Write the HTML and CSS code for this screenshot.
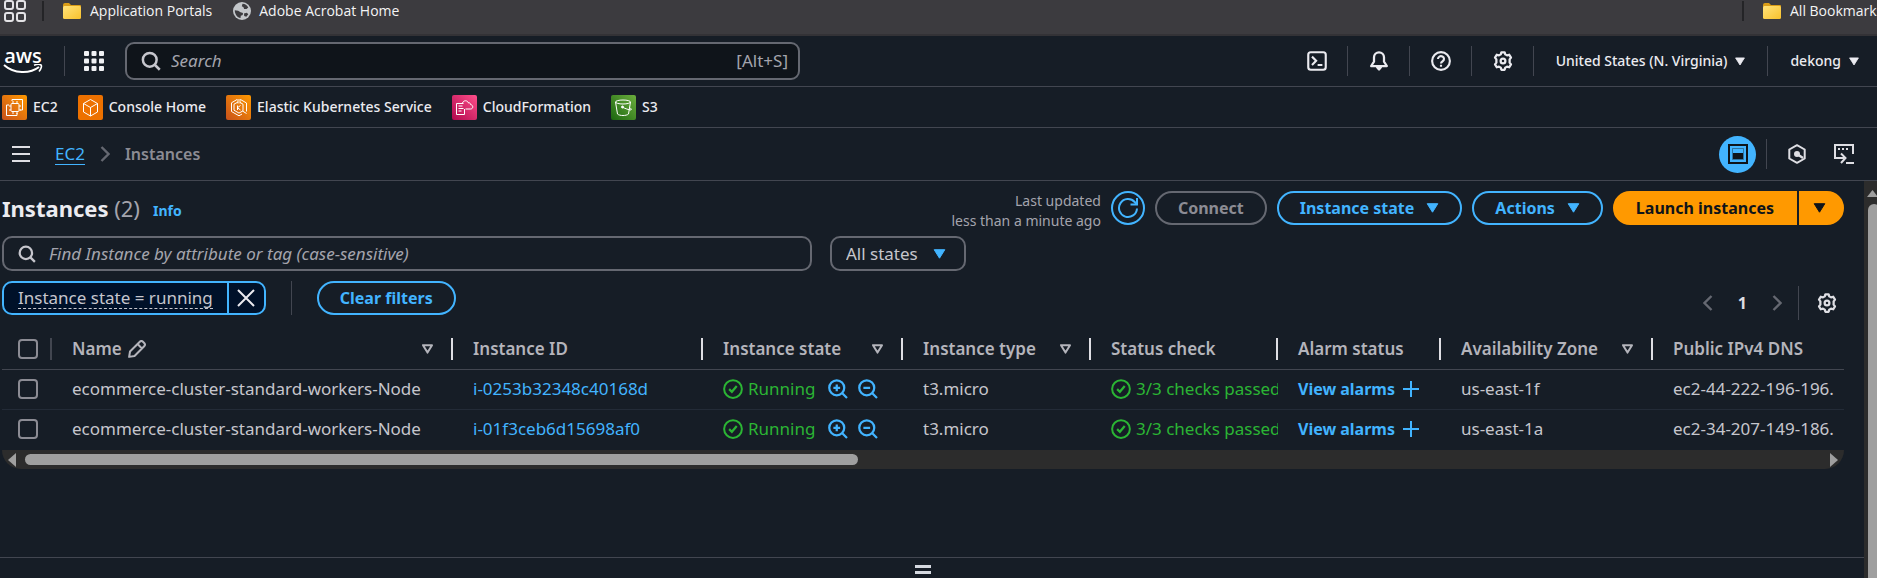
FILE: index.html
```html
<!DOCTYPE html>
<html lang="en">
<head>
<meta charset="utf-8">
<title>Instances | EC2</title>
<link rel="stylesheet" href="styles.css">
</head>
<body>
<svg class="defs" aria-hidden="true">
  <defs>
    <linearGradient id="g-orange" x1="0" y1="1" x2="1" y2="0"><stop offset="0" stop-color="#c8511b"/><stop offset="1" stop-color="#ff9900"/></linearGradient>
    <linearGradient id="g-pink" x1="0" y1="1" x2="1" y2="0"><stop offset="0" stop-color="#b0084d"/><stop offset="1" stop-color="#ff4f8b"/></linearGradient>
    <linearGradient id="g-green" x1="0" y1="1" x2="1" y2="0"><stop offset="0" stop-color="#1b660f"/><stop offset="1" stop-color="#6cae3e"/></linearGradient>
    <linearGradient id="g-folder" x1="0" y1="0" x2="1" y2="1"><stop offset="0" stop-color="#ffe27a"/><stop offset="1" stop-color="#f8c12c"/></linearGradient>
    <symbol id="i-folder" viewBox="0 0 20 18"><path fill="#d99c17" d="M1 3a2 2 0 0 1 2-2h4l2 2h9a1 1 0 0 1 1 1v12H1z"/><rect x="1" y="4" width="18" height="13" rx="1.500" fill="url(#g-folder)"/></symbol>
    <symbol id="i-search" viewBox="0 0 16 16"><g fill="none" stroke="currentColor" stroke-width="2"><circle cx="7" cy="7" r="5.500"/><path d="m11 11 4 4"/></g></symbol>
    <symbol id="i-caret" viewBox="0 0 12 10"><path fill="currentColor" stroke="currentColor" stroke-linejoin="round" d="M.7.700h10.600L6 9.200z"/></symbol>
    <symbol id="i-sort" viewBox="0 0 12 10"><path fill="none" stroke="currentColor" stroke-width="2" stroke-linejoin="round" d="M1.500 1.200h9L6 8.600z"/></symbol>
    <symbol id="i-gear" viewBox="0 0 16 16"><g fill="none" stroke="currentColor" stroke-width="1.800" stroke-linejoin="round"><path d="M6.700 1h2.600l.5 1.700 1.400.8 1.800-.5 1.400 2.300-1.100 1.400v2.600l1.100 1.400-1.400 2.300-1.800-.5-1.400.8-.5 1.700H6.700l-.5-1.700-1.400-.8-1.800.5-1.400-2.300 1.100-1.400V6.700L1.600 5.300 3 3l1.800.5 1.400-.8z"/><circle cx="8" cy="8" r="1.900"/></g></symbol>
    <symbol id="i-check" viewBox="0 0 16 16"><g fill="none" stroke="currentColor" stroke-width="1.600"><circle cx="8" cy="8" r="7.100"/><path stroke-width="1.800" d="m4.900 8.100 2.200 2.100 3.900-4.600"/></g></symbol>
    <symbol id="i-zoomin" viewBox="0 0 16 16"><g fill="none" stroke="currentColor" stroke-width="1.800"><circle cx="7" cy="7" r="6"/><path d="m11.200 11.200 4 4M7 4.300v5.400M4.300 7h5.400"/></g></symbol>
    <symbol id="i-zoomout" viewBox="0 0 16 16"><g fill="none" stroke="currentColor" stroke-width="1.800"><circle cx="7" cy="7" r="6"/><path d="m11.200 11.200 4 4M4.300 7h5.400"/></g></symbol>
    <symbol id="i-plus" viewBox="0 0 16 16"><path stroke="currentColor" stroke-width="2" d="M8 0v16M0 8h16"/></symbol>
    <symbol id="i-right" viewBox="0 0 10 16"><path fill="none" stroke="currentColor" stroke-width="2.400" d="m1.500 1 7 7-7 7"/></symbol>
    <symbol id="i-left" viewBox="0 0 10 16"><path fill="none" stroke="currentColor" stroke-width="2.400" d="m8.500 1-7 7 7 7"/></symbol>
  </defs>
</svg>

<div class="bookmarks">
  <button class="plain" aria-label="Tab groups"><svg width="24" height="24" viewBox="0 0 24 24" fill="none" stroke="#e4e3e6" stroke-width="2"><rect x="2" y="2" width="8" height="8" rx="2"/><rect x="14" y="2" width="8" height="8" rx="2"/><rect x="2" y="14" width="8" height="8" rx="2"/><rect x="14" y="14" width="8" height="8" rx="2"/></svg></button>
  <span class="bm-rule"></span>
  <a class="bm" href="#"><svg width="20" height="18"><use href="#i-folder"/></svg>Application Portals</a>
  <a class="bm" href="#"><svg width="18" height="18" viewBox="0 0 18 18"><circle cx="9" cy="9" r="9" fill="#c3c6ca"/><path fill="#3c3b3f" d="M9.500 1.800c2.600.2 4.600 1.500 5.800 3.700l-1.800 1.600-2.400-.2-.6-1.700-1.700-1zM1.800 8.200l3.400.6 2.300 1.500 2.500.6-.3 2-1.900.9-.3 2.300C4.300 15.300 1.700 12.300 1.800 8.200zM11 11.600l2.800-.9 1.500 1.500-2 2.500-2.100-.8z"/></svg>Adobe Acrobat Home</a>
  <span class="bm-rule bm-end"></span>
  <a class="bm bm-all" href="#"><svg width="20" height="18"><use href="#i-folder"/></svg>All Bookmarks</a>
</div>

<header class="top">
  <a class="logo" href="#" aria-label="AWS home"><span class="logo-word">aws</span><svg width="40" height="10" viewBox="0 0 40 10" fill="none" stroke="#fff"><path stroke-width="2" d="M1 1c10 9 26 9 35 2"/><path stroke-width="1.600" d="M31 1.300c3-1.200 6-1 7-.3s.3 4-2 6.500"/></svg></a>
  <span class="rule"></span>
  <button class="plain services" aria-label="Services"><svg width="20" height="20" viewBox="0 0 20 20" fill="#f0f1f4"><g id="dots"><rect width="5" height="5" rx="1"/><rect x="7.500" width="5" height="5" rx="1"/><rect x="15" width="5" height="5" rx="1"/></g><use href="#dots" y="7.500"/><use href="#dots" y="15"/></svg></button>
  <label class="search"><svg width="20" height="20"><use href="#i-search"/></svg><input type="text" placeholder="Search" aria-label="Search"><span>[Alt+S]</span></label>
  <nav class="tools">
    <button class="plain tool" aria-label="CloudShell"><svg width="20" height="20" viewBox="0 0 16 16" fill="none" stroke="currentColor" stroke-width="1.700"><rect x="1" y="1" width="14" height="14" rx="2"/><path d="m4 4.500 3.300 3.300L4 11.200M8.500 11.200h3.800"/></svg></button>
    <button class="plain tool" aria-label="Notifications"><svg width="20" height="20" viewBox="0 0 16 16" fill="none" stroke="currentColor" stroke-width="1.800" stroke-linejoin="round"><path d="M8 1a4 4 0 0 0-4 4v3.500L1.700 12h12.600L12 8.500V5a4 4 0 0 0-4-4z"/><path fill="currentColor" d="M6.500 13h3L8 14.800z"/></svg></button>
    <button class="plain tool" aria-label="Help"><svg width="20" height="20" viewBox="0 0 16 16" fill="none" stroke="currentColor" stroke-width="1.700"><circle cx="8" cy="8" r="7.100"/><path d="M5.600 6.400a2.400 2.200 0 1 1 3.700 1.800C8.300 8.800 8 9 8 10"/><path d="M8 11v1.600"/></svg></button>
    <button class="plain tool" aria-label="Settings"><svg width="20" height="20"><use href="#i-gear"/></svg></button>
    <button class="plain menu">United States (N. Virginia)<svg width="10" height="9"><use href="#i-caret"/></svg></button>
    <button class="plain menu">dekong<svg width="10" height="9"><use href="#i-caret"/></svg></button>
  </nav>
</header>

<nav class="favorites">
  <a href="#"><svg width="25" height="25" viewBox="0 0 25 25" fill="none" stroke="#fff"><rect width="25" height="25" rx="2" fill="url(#g-orange)" stroke="none"/><path d="M10 6V4.500h10.500V15H18M7 10H4.500v10.500H15V18"/><rect x="9" y="8.500" width="8" height="8" rx="1"/><path d="M11 6v2M15 6v2M11 17v2M15 17v2M7 11h2M7 15h2M17 11h2M17 15h2"/></svg>EC2</a>
  <a href="#"><svg width="25" height="25" viewBox="0 0 25 25" fill="none" stroke="#fff"><rect width="25" height="25" rx="2" fill="#ed7100" stroke="none"/><path stroke-linejoin="round" d="m12.500 4.500 7 4v8.500l-7 4-7-4V8.500zM5.500 8.500l7 4 7-4M12.500 12.500V21"/></svg>Console Home</a>
  <a href="#"><svg width="25" height="25" viewBox="0 0 25 25" fill="none" stroke="#fff"><rect width="25" height="25" rx="2" fill="url(#g-orange)" stroke="none"/><path d="M11 4.500 5.500 7.800v8.700l7.500 4.300 3-1.800M14.500 4.500l6 3.500v8.500M12 7 8 9.200v6l5 2.900 4-2.300V9.200L14 7.400M12 4v4.500M14 4v4.500M16.500 16l4 2.500M11.500 10.500v4.500M14.500 10.500l-3 2.200 3 2.300"/></svg>Elastic Kubernetes Service</a>
  <a href="#"><svg width="25" height="25" viewBox="0 0 25 25" fill="none" stroke="#fff"><rect width="25" height="25" rx="2" fill="url(#g-pink)" stroke="none"/><path d="M12.500 14v5.500h-8V8.500h7M6.500 11h4M6.500 13.500h5M6.500 16h3M10.500 8c1-3 5-3 6 0 1.500-.5 2 .5 2 1.500 3 .5 3 4.500 0 4.500h-5"/></svg>CloudFormation</a>
  <a href="#"><svg width="25" height="25" viewBox="0 0 25 25" fill="none" stroke="#fff"><rect width="25" height="25" rx="2" fill="url(#g-green)" stroke="none"/><ellipse cx="12" cy="7" rx="7.500" ry="2"/><path d="m4.500 7 2 12c2 2 9 2 11 0l2-12M11 12c3 1.500 7 3 9 3 1-.5-.5-2-2-3"/><circle cx="11.500" cy="12" r="1" fill="#fff"/></svg>S3</a>
</nav>

<div class="crumbs">
  <button class="plain" aria-label="Open navigation"><svg width="18" height="16" viewBox="0 0 18 16" fill="#dedee3"><path d="M0 0h18v2H0zM0 7h18v2H0zM0 14h18v2H0z"/></svg></button>
  <a class="crumb-link" href="#">EC2</a>
  <svg class="crumb-sep" width="10" height="16"><use href="#i-right"/></svg>
  <span class="crumb-here">Instances</span>
  <div class="crumb-tools">
    <button class="plain split" aria-label="Split panel"><svg width="20" height="20" viewBox="0 0 20 20"><rect x="1" y="1" width="18" height="18" fill="none" stroke="#0f141a" stroke-width="2"/><path fill="none" stroke="#0f141a" stroke-opacity=".4" d="M4.500 4.500h11v11h-11z"/><path fill="#0f141a" d="M5 9h10v6H5z"/></svg></button>
    <span class="rule"></span>
    <button class="plain" aria-label="Amazon Q"><svg width="20" height="20" viewBox="0 0 20 20" fill="none" stroke="#dedee3" stroke-width="2"><path stroke-linejoin="round" d="m10 1.200 7.700 4.300v9L10 18.800l-7.700-4.300v-9z"/><path stroke-width="2.500" d="m10 10 6 4"/><circle cx="10" cy="10" r="2" fill="#dedee3"/></svg></button>
    <button class="plain" aria-label="Console to code"><svg width="20" height="20" viewBox="0 0 20 20" fill="none" stroke="#dedee3" stroke-width="2"><path d="M19 10V1H1v13h9M7 9.500l4.500 4.500L7 19M12 19h8"/><path d="M4 5h2M8 5h2M12 5h2"/></svg></button>
  </div>
</div>

<div class="body">
  <main class="page">
    <section class="instances">
      <div class="heading">
        <h1>Instances <span>(2)</span></h1>
        <a class="info" href="#">Info</a>
        <div class="actions">
          <p class="updated">Last updated<br>less than a minute ago</p>
          <button class="btn refresh" aria-label="Refresh"><svg width="22" height="22" viewBox="0 0 22 22" fill="none" stroke="currentColor" stroke-width="2"><path d="M20 11.500A9 9 0 1 1 17.700 5L20 7.500"/><path d="M20 1v6.500h-6.500"/></svg></button>
          <button class="btn" disabled>Connect</button>
          <button class="btn">Instance state<svg width="13" height="10"><use href="#i-caret"/></svg></button>
          <button class="btn">Actions<svg width="13" height="10"><use href="#i-caret"/></svg></button>
          <div class="launch"><button class="btn">Launch instances</button><button class="btn" aria-label="More launch options"><svg width="13" height="10"><use href="#i-caret"/></svg></button></div>
        </div>
      </div>
      <div class="filters">
        <label class="find"><svg width="18" height="18"><use href="#i-search"/></svg><input type="text" placeholder="Find Instance by attribute or tag (case-sensitive)" aria-label="Find Instance"></label>
        <div class="states"><select aria-label="States"><option>All states</option></select><svg width="13" height="10"><use href="#i-caret"/></svg></div>
      </div>
      <div class="tokens">
        <div class="token"><button class="plain token-text"><span>Instance state = running</span></button><button class="plain token-x" aria-label="Remove filter"><svg width="18" height="18" viewBox="0 0 18 18" stroke="#ebebf0" stroke-width="2"><path d="m1 1 16 16M17 1 1 17"/></svg></button></div>
        <span class="rule"></span>
        <button class="btn">Clear filters</button>
        <div class="pager">
          <button class="plain dim" aria-label="Previous page"><svg width="10" height="16"><use href="#i-left"/></svg></button>
          <button class="plain page-no">1</button>
          <button class="plain dim" aria-label="Next page"><svg width="10" height="16"><use href="#i-right"/></svg></button>
          <span class="rule"></span>
          <button class="plain" aria-label="Preferences"><svg width="20" height="20"><use href="#i-gear"/></svg></button>
        </div>
      </div>
      <table class="grid">
        <colgroup><col class="c-pick"><col class="c-name"><col class="c-id"><col class="c-state"><col class="c-type"><col class="c-check"><col class="c-alarm"><col class="c-zone"><col></colgroup>
        <thead>
          <tr>
            <th class="pick"><div><input type="checkbox" aria-label="Select all"></div></th>
            <th><div>Name<svg class="pencil" width="18" height="18" viewBox="0 0 16 16" fill="none" stroke="currentColor" stroke-width="1.800" stroke-linejoin="round"><path d="M1 15l.8-4.800L10.500 1.600a2 2 0 0 1 2.800 0l1.100 1.100a2 2 0 0 1 0 2.800L5.800 14.200zM8.500 3.600l3.900 3.900"/></svg><svg class="sort" width="13" height="10"><use href="#i-sort"/></svg></div></th>
            <th><div>Instance ID</div></th>
            <th><div>Instance state<svg class="sort" width="13" height="10"><use href="#i-sort"/></svg></div></th>
            <th><div>Instance type<svg class="sort" width="13" height="10"><use href="#i-sort"/></svg></div></th>
            <th><div>Status check</div></th>
            <th><div>Alarm status</div></th>
            <th><div>Availability Zone<svg class="sort" width="13" height="10"><use href="#i-sort"/></svg></div></th>
            <th class="last"><div>Public IPv4 DNS</div></th>
          </tr>
        </thead>
        <tbody>
          <tr>
            <td class="pick"><div><input type="checkbox" aria-label="Select i-0253b32348c40168d"></div></td>
            <td>ecommerce-cluster-standard-workers-Node</td>
            <td><a href="#">i-0253b32348c40168d</a></td>
            <td><div class="cell"><span class="ok"><svg width="20" height="20"><use href="#i-check"/></svg>Running</span><button class="plain zoom" aria-label="Filter in"><svg width="20" height="20"><use href="#i-zoomin"/></svg></button><button class="plain zoom" aria-label="Filter out"><svg width="20" height="20"><use href="#i-zoomout"/></svg></button></div></td>
            <td>t3.micro</td>
            <td><div class="cell"><span class="ok"><svg width="20" height="20"><use href="#i-check"/></svg>3/3 checks passed</span></div></td>
            <td><div class="cell"><a class="alarm" href="#">View alarms<svg width="16" height="16"><use href="#i-plus"/></svg></a></div></td>
            <td>us-east-1f</td>
            <td>ec2-44-222-196-196.</td>
          </tr>
          <tr>
            <td class="pick"><div><input type="checkbox" aria-label="Select i-01f3ceb6d15698af0"></div></td>
            <td>ecommerce-cluster-standard-workers-Node</td>
            <td><a href="#">i-01f3ceb6d15698af0</a></td>
            <td><div class="cell"><span class="ok"><svg width="20" height="20"><use href="#i-check"/></svg>Running</span><button class="plain zoom" aria-label="Filter in"><svg width="20" height="20"><use href="#i-zoomin"/></svg></button><button class="plain zoom" aria-label="Filter out"><svg width="20" height="20"><use href="#i-zoomout"/></svg></button></div></td>
            <td>t3.micro</td>
            <td><div class="cell"><span class="ok"><svg width="20" height="20"><use href="#i-check"/></svg>3/3 checks passed</span></div></td>
            <td><div class="cell"><a class="alarm" href="#">View alarms<svg width="16" height="16"><use href="#i-plus"/></svg></a></div></td>
            <td>us-east-1a</td>
            <td>ec2-34-207-149-186.</td>
          </tr>
        </tbody>
      </table>
      <div class="hbar" aria-hidden="true"><svg width="8" height="14" viewBox="0 0 8 14"><path fill="#9f9f9f" d="M8 0v14L0 7z"/></svg><div class="htrack"><div class="hthumb"></div></div><svg width="8" height="14" viewBox="0 0 8 14"><path fill="#9f9f9f" d="M0 0v14l8-7z"/></svg></div>
    </section>
    <div class="panel"><button class="plain" aria-label="Resize panel"><svg width="16" height="10" viewBox="0 0 16 10" fill="#d5d9e0"><path d="M0 0h16v3H0zM0 6h16v3H0z"/></svg></button></div>
  </main>
  <div class="vbar" aria-hidden="true"><svg width="11" height="7" viewBox="0 0 11 7"><path fill="#9f9f9f" d="M0 7 5.500 0 11 7z"/></svg><div class="vthumb"></div></div>
</div>
</body>
</html>
```
FILE: styles.css
```css
* { box-sizing: border-box; }
body {
  margin: 0;
  height: 100vh;
  display: flex;
  flex-direction: column;
  overflow: hidden;
  background: #161d26;
  color: #c6c6cd;
  font: 17px/20px "Noto Sans", "Open Sans", sans-serif;
}
svg { flex: none; display: block; }
.defs { width: 0; height: 0; position: absolute; }
a { color: #42b4ff; text-decoration: none; }
input, select, button { font: inherit; color: inherit; }
.plain { background: none; border: 0; padding: 0; display: flex; align-items: center; cursor: pointer; }
.rule { width: 1px; height: 30px; background: #424650; flex: none; }

/* Browser bookmarks */
.bookmarks {
  flex: none; height: 36px; padding: 0 0 12px 3px;
  display: flex; align-items: center;
  background: #3c3b3f; border-bottom: 2px solid #333236;
  font: 14px/20px "Open Sans", "Noto Sans", sans-serif; color: #f4f4f5;
  white-space: nowrap; overflow: hidden;
}
.bm-rule { width: 2px; height: 20px; margin: 0 18px 0 15px; background: #242427; flex: none; }
.bm { display: flex; align-items: center; gap: 8px; color: inherit; margin-right: 21px; }
.bm-end { margin-left: auto; }
.bm-all { width: 115px; margin-right: 0; }

/* Console header */
.top { flex: none; height: 51px; display: flex; align-items: center; border-bottom: 1px solid #424650; padding: 0 18px 0 3px; color: #ebebf0; }
.logo { width: 40px; display: flex; flex-direction: column; align-items: center; color: #fff; }
.logo-word { font: 600 20px/15px "Open Sans", sans-serif; }
.logo svg { margin-top: 1px; }
.top > .rule { margin: 0 19px 0 21px; }
.services { margin-right: 21px; }
.search {
  flex: 0 1 675px; height: 38px; padding: 0 10px 0 14px;
  display: flex; align-items: center; gap: 10px;
  background: #0f141a; border: 2px solid #656871; border-radius: 9px; color: #c6c6cd;
}
.search input, .find input { flex: 1; min-width: 0; background: none; border: 0; outline: 0; padding: 0; }
input::placeholder { color: #a4a4ad; font-style: italic; opacity: 1; }
.search span { color: #a4a4ad; }
.tools { margin-left: auto; display: flex; align-items: center; white-space: nowrap; }
.tool { height: 30px; padding: 0 20px 0 21px; border-right: 1px solid #424650; }
.menu { height: 30px; padding: 0 22px; border-right: 1px solid #424650; font-size: 14px; font-weight: 500; gap: 8px; }
.menu:last-child { border: 0; padding-right: 0; }

/* Favorites */
.favorites { flex: none; height: 41px; padding: 0 2px; display: flex; align-items: center; gap: 20px; border-bottom: 1px solid #424650; font-size: 14px; font-weight: 500; white-space: nowrap; }
.favorites a { display: flex; align-items: center; gap: 6px; color: #ebebf0; }

/* Breadcrumbs */
.crumbs { flex: none; height: 53px; padding: 0 23px 0 12px; display: flex; align-items: center; border-bottom: 1px solid #424650; }
.crumb-link { margin: 0 15px 0 25px; border-bottom: 1px solid #42b4ff; }
.crumb-sep { margin-right: 15px; color: #656871; }
.crumb-here { color: #8c8c94; font-size: 16px; font-weight: 600; }
.crumb-tools { margin-left: auto; display: flex; align-items: center; }
.crumb-tools .rule { margin: 0 20px 0 10px; }
.split { width: 37px; height: 37px; border-radius: 50%; background: #42b4ff; justify-content: center; }
.crumb-tools > :last-child { margin-left: 27px; }

/* Page body */
.body { flex: 1; min-height: 0; display: flex; }
.page { flex: 1; min-width: 0; display: flex; flex-direction: column; justify-content: space-between; }
.instances { padding: 10px 20px 0 2px; }
.heading { display: flex; height: 36px; align-items: flex-start; }
h1 { margin: 0; font-size: 22px; line-height: 34px; color: #ebebf0; white-space: nowrap; }
h1 span { color: #a4a4ad; font-weight: 400; }
.info { margin-left: 13px; font-size: 14px; font-weight: 700; line-height: 40px; }
.actions { margin-left: auto; display: flex; gap: 10px; white-space: nowrap; }
.updated { margin: 0; font-size: 14px; text-align: right; color: #a4a4ad; }
.btn {
  height: 34px; padding: 0 21px; display: flex; align-items: center; gap: 12px;
  background: none; border: 2px solid #42b4ff; border-radius: 17px; color: #42b4ff; font-size: 16px; font-weight: 700; white-space: nowrap; cursor: pointer;
}
.btn:disabled { border-color: #656871; color: #8c8c94; }
.refresh { width: 34px; padding: 0; justify-content: center; }
.launch { display: flex; gap: 2px; }
.launch .btn { background: #ff9900; border-color: #ff9900; color: #0f141a; }
.launch .btn:first-child { border-radius: 17px 0 0 17px; }
.launch .btn:last-child { border-radius: 0 17px 17px 0; padding: 0 16px 0 12px; }

.filters { display: flex; gap: 18px; margin: 9px 0 10px; }
.find { flex: 0 1 810px; height: 35px; padding: 0 14px; display: flex; align-items: center; gap: 13px; border: 2px solid #656871; border-radius: 10px; }
.states { display: grid; align-items: center; width: 136px; }
.states > * { grid-area: 1 / 1; }
.states select { appearance: none; width: 100%; height: 35px; padding: 0 14px; background: none; border: 2px solid #656871; border-radius: 10px; }
.states svg { justify-self: end; margin-right: 20px; color: #42b4ff; pointer-events: none; }

.tokens { display: flex; align-items: center; height: 34px; }
.token { height: 34px; display: flex; border: 2px solid #42b4ff; border-radius: 10px; background: #001129; overflow: hidden; white-space: nowrap; }
.token-text { padding: 0 14px; border-right: 2px solid #42b4ff; }
.token-text span { border-bottom: 1px dashed #c6c6cd; }
.token-x { width: 35px; justify-content: center; }
.tokens > .rule { height: 34px; margin: 0 25px; }
.pager { margin: 10px 7px 0 auto; display: flex; align-items: center; color: #dedee3; }
.pager .rule { height: 34px; margin: 0 18px 0 16px; }
.page-no { margin: 0 25px; font-size: 16px; font-weight: 700; }
.dim { color: #656871; }

/* Instances table */
.grid { width: 100%; margin-top: 14px; table-layout: fixed; border-collapse: collapse; white-space: nowrap; }
.c-pick { width: 50px; }
.c-name { width: 401px; }
.c-id { width: 250px; }
.c-state { width: 200px; }
.c-type { width: 188px; }
.c-check { width: 187px; }
.c-alarm { width: 163px; }
.c-zone { width: 212px; }
th, td { padding: 0 0 0 20px; text-align: left; overflow: hidden; }
th { height: 40px; border-bottom: 1px solid #424650; color: #b4b4bb; font-weight: 600; }
td { height: 40px; }
tbody tr:first-child td { border-bottom: 1px solid #232b37; }
tbody tr:last-child td { height: 41px; padding-bottom: 2px; }
th div { height: 22px; display: flex; align-items: center; border-right: 2px solid #dedee3; }
th.last div { border: 0; }
th.pick, td.pick { padding-left: 16px; }
th.pick div { border-right-color: #424650; }
.pick input { appearance: none; display: block; width: 20px; height: 20px; margin: 0; border: 2px solid #8c8c94; border-radius: 4px; }
.pencil { margin-left: 6px; }
.sort { margin: 0 17px 0 auto; }
.cell { display: flex; align-items: center; }
.ok { display: flex; align-items: center; gap: 5px; margin-right: 13px; color: #2bb534; }
.zoom { margin-right: 10px; color: #42b4ff; }
.alarm { display: flex; align-items: center; gap: 8px; font-size: 16px; font-weight: 700; }

/* Scroll bars and the split panel */
.hbar { height: 19px; padding: 0 6px; display: flex; align-items: center; gap: 9px; background: #2c2c2c; border-radius: 0 0 19px 19px; }
.htrack { flex: 1; }
.hthumb { width: 46.4%; height: 11px; border-radius: 6px; background: #9f9f9f; }
.vbar { width: 13px; padding: 9px 0 0 3px; display: flex; flex-direction: column; background: #2c2c2c; overflow: hidden; }
.vthumb { flex: 1; width: 12px; margin: 7px 0 0 1px; border-radius: 6px 6px 0 0; background: #9f9f9f; }
.panel { height: 21px; padding: 7px 18px 0 0; display: flex; justify-content: center; align-items: flex-start; border-top: 1px solid #424650; }
```
